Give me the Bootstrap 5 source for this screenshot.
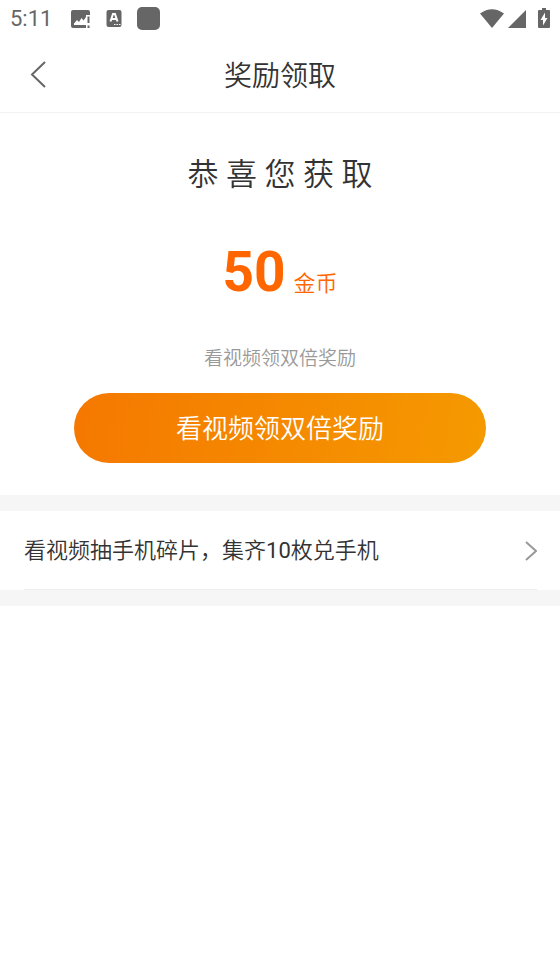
<!DOCTYPE html>
<html lang="zh-CN">
<head>
<meta charset="utf-8">
<meta name="viewport" content="width=device-width, initial-scale=1">
<title>奖励领取</title>
<link href="https://cdn.jsdelivr.net/npm/bootstrap@5.3.0/dist/css/bootstrap.min.css" rel="stylesheet">
<style>
  body { font-family: Roboto, "Noto Sans CJK SC", sans-serif; color: #333; background: #fff; font-weight: 350; }
  .status-bar { height: 38px; padding: 0 10px; color: #666; font-size: 22px; line-height: 38px; }
  .status-bar svg { display: block; }
  .status-icons { padding-left: 19px; gap: 15px; }
  .title-bar { display: grid; grid-template-columns: 1fr auto 1fr; height: 75px; border-bottom: 1px solid #f2f2f2; }
  .title-bar h1 { font-size: 28px; line-height: 40px; font-weight: 350; padding-top: 4px; }
  .back-btn { padding: 12px 28px; color: #666; line-height: 0; }
  .reward { padding: 42px 24px 32px; }
  .reward h2 { font-size: 31px; line-height: 40px; font-weight: 350; margin-bottom: 45px; }
  .amount { color: #ff6600; line-height: 64px; margin-bottom: 31px; }
  .amount strong { font-size: 55px; font-weight: 700; }
  .amount span { font-size: 22px; }
  .hint { font-size: 19px; line-height: 24px; color: #999; margin-bottom: 22px; }
  .video-btn { width: 80.5%; height: 70px; padding: 8px 0 6px; font-size: 26px; font-weight: 350; color: #fff; border: 0; background: linear-gradient(100deg, #f57800, #f59a00); }
  .video-btn:hover { color: #fff; }
  .divider { height: 16px; background: #f6f6f6; }
  .entry { margin: 0 23px 0 24px; padding: 21px 0 19px; border-bottom: 1px solid #eee; color: #333; font-size: 22px; line-height: 38px; }
</style>
</head>
<body>
<header>
  <div class="status-bar d-flex align-items-center justify-content-between">
    <div class="d-flex align-items-center">
      <span class="fw-normal">5:11</span>
      <div class="status-icons d-flex align-items-center">
        <svg width="20" height="24" viewBox="0 0 20 24" aria-hidden="true"><path fill="currentColor" d="M2 3h15q2 0 2 2v3h-4v13H2q-2 0-2-2V5q0-2 2-2z"/><path fill="#fff" d="M3 18v-1.500L6 13l2 2 2.500-4 2 2.500L15 10v8z"/><path fill="currentColor" d="M16.500 9.500h2V16h-2zM16.500 18.500h2v2.500h-2z"/></svg>
        <svg width="16" height="24" viewBox="0 0 16 24" aria-hidden="true"><rect x="0.500" y="3" width="15" height="17" rx="2" fill="currentColor"/><path d="M4.500 14.500 7 7h2l2.500 7.500M5.500 12h5" fill="none" stroke="#fff" stroke-width="2"/><path d="M8 17.500h1.500M10.500 17.500H12M13 17.500h1.500" stroke="#fff" stroke-width="1"/></svg>
        <svg width="23" height="24" viewBox="0 0 23 24" aria-hidden="true"><rect width="23" height="23" rx="5" fill="currentColor"/></svg>
      </div>
    </div>
    <div class="d-flex align-items-center gap-1">
      <svg width="24" height="24" viewBox="0 0 24 24" fill="currentColor" aria-hidden="true"><path d="M0 6.500Q12-2 24 6.500L12 21z"/></svg>
      <svg width="18" height="24" viewBox="0 0 18 24" fill="currentColor" aria-hidden="true"><path d="M18 3v18H0z"/></svg>
      <svg class="ms-2" width="12" height="24" viewBox="0 0 12 24" aria-hidden="true"><path fill="currentColor" d="M4 1h4v2h3q1 0 1 1v16q0 1-1 1H1q-1 0-1-1V4q0-1 1-1h3z"/><path fill="#fff" d="M7 5.500 2.500 13H5v5.500L9.500 11H7z"/></svg>
    </div>
  </div>
  <nav class="title-bar align-items-center" aria-label="标题栏">
    <button type="button" class="back-btn btn border-0 rounded-0 me-auto" aria-label="返回"><svg width="20" height="28" viewBox="0 0 20 28" fill="none" stroke="currentColor" stroke-width="2" aria-hidden="true"><path d="M17 1 4 13.500 17 26"/></svg></button>
    <h1 class="m-0">奖励领取</h1>
  </nav>
</header>
<main>
  <section class="reward text-center">
    <h2>恭 喜 您 获 取</h2>
    <p class="amount d-flex justify-content-center align-items-baseline gap-2"><strong>50</strong><span>金币</span></p>
    <p class="hint">看视频领双倍奖励</p>
    <button type="button" class="video-btn btn rounded-pill">看视频领双倍奖励</button>
  </section>
  <div class="divider"></div>
  <a href="#" class="entry d-flex align-items-center justify-content-between text-decoration-none">
    <span>看视频抽手机碎片，集齐<span class="fw-normal">10</span>枚兑手机</span>
    <svg width="12" height="20" viewBox="0 0 12 20" fill="none" stroke="#999" stroke-width="2" aria-hidden="true"><path d="M1 1l10 9-10 9"/></svg>
  </a>
  <div class="divider"></div>
</main>
<script src="https://cdn.jsdelivr.net/npm/bootstrap@5.3.0/dist/js/bootstrap.bundle.min.js"></script>
</body>
</html>
